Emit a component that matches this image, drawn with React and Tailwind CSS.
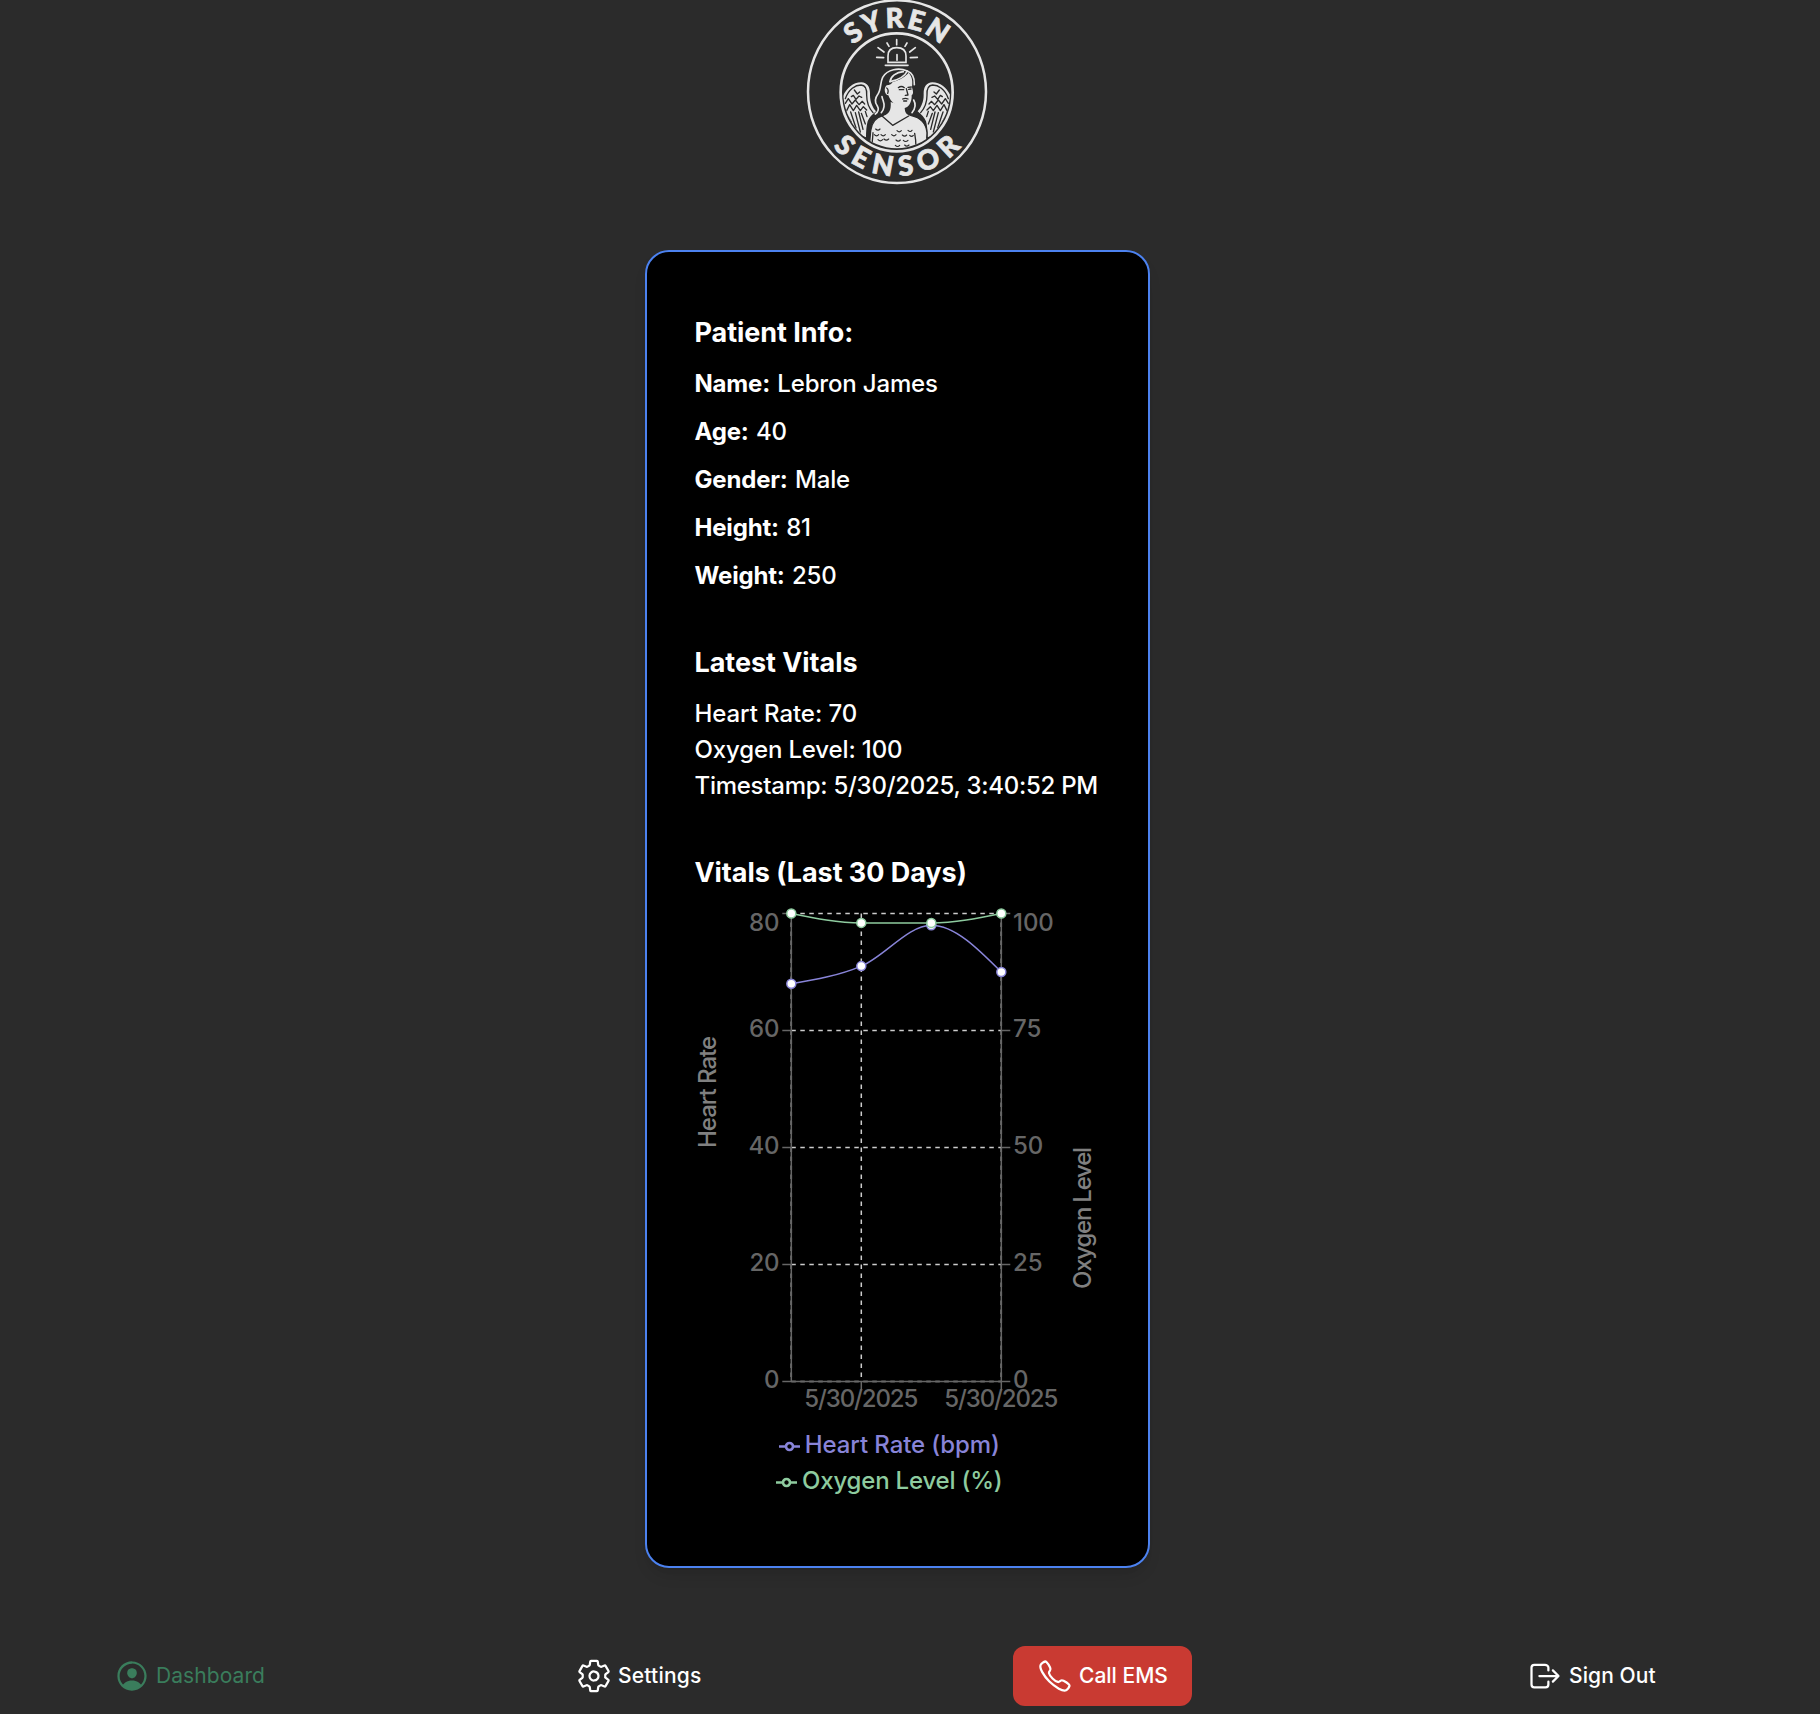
import { IoPersonCircleOutline, IoSettingsOutline, IoCallOutline, IoLogOutOutline } from "react-icons/io5";

const INK = "#2b2b2b";
const LIGHT = "#e6e6e6";

function Wing() {
  return (
    <g>
      <path
        d="M150 312C160 276 180 248 214 247C233 248 241 262 240 284C240 306 248 322 258 334C246 344 238 352 233 364C229 378 228 396 228 412C190 400 160 356 150 312Z"
        fill={LIGHT}
      />
      <g fill="none" stroke={INK} strokeWidth="4" strokeLinecap="round" strokeLinejoin="round">
        <path d="M166 296C176 268 196 255 213 255C228 256 231 270 230 286C230 308 238 326 249 338" />
        <path d="M193 270L202 282L209 276M184 290L190 286L198 298L207 288L215 292" />
        <path d="M166 310L175 296L186 312L196 300L207 314L217 304L224 312" />
        <path d="M170 332L179 314L190 332L200 316L211 332L220 320L230 330" />
        <path d="M168 340L184 366M182 336L198 384M196 338L211 396M206 336L219 388M214 340L226 372M226 334L231 350" />
      </g>
    </g>
  );
}

function Logo() {
  return (
    <svg viewBox="0 0 660 600" className="h-[200px] w-[220px]" role="img" aria-label="Syren Sensor">
      <defs>
        <path id="arc-top" d="M128 276A193 193 0 0 1 514 276" />
        <path id="arc-bottom" d="M68 276A253 252 0 0 0 574 276" />
        <clipPath id="badge">
          <ellipse cx="320" cy="277" rx="160" ry="168" />
        </clipPath>
      </defs>
      <ellipse cx="321" cy="275" rx="267" ry="274" fill="none" stroke={LIGHT} strokeWidth="7.5" />
      <ellipse cx="320" cy="277" rx="168" ry="177" fill="none" stroke={LIGHT} strokeWidth="8" />
      <g
        fill={LIGHT}
        stroke={LIGHT}
        strokeWidth="2.5"
        fontFamily="Lato, sans-serif"
        fontWeight="900"
        fontSize="82"
      >
        <text textAnchor="middle" textLength="290">
          <textPath href="#arc-top" startOffset="50%" textLength="290">SYREN</textPath>
        </text>
        <text textAnchor="middle" textLength="436">
          <textPath href="#arc-bottom" startOffset="50%" textLength="436">SENSOR</textPath>
        </text>
      </g>
      <g fill="none" stroke={LIGHT} strokeWidth="5" strokeLinecap="round">
        <path d="M320 119V134M291 129L297 139M351 129L345 139M264 143L282 156M376 143L359 156M260 172L281 173M361 173L382 172" />
        <path d="M294 187V168C294 150 304 143 320 143S348 150 348 168V187Z" />
        <path d="M321 164V181" />
        <path d="M286 196H354" />
      </g>
      <g clipPath="url(#badge)">
        <Wing />
        <g transform="translate(641 0) scale(-1 1)">
          <Wing />
        </g>
        <path
          d="M302 312C304 330 298 342 278 347C256 353 245 368 242 392L236 460H408L411 398C408 368 388 352 364 347C350 344 344 338 344 322Z"
          fill={LIGHT}
          stroke={INK}
          strokeWidth="4"
        />
        <path
          d="M256 342C268 330 258 320 254 306C252 292 266 284 268 262C268 232 290 206 326 204C352 206 374 222 375 250L374 300C382 316 378 330 368 340L344 336L300 338Z"
          fill={INK}
        />
        <path
          d="M302 306C304 330 298 342 280 348L308 376L358 347C350 344 344 338 344 320Z"
          fill={LIGHT}
        />
        <path
          d="M295 286C284 286 280 264 290 256C298 254 304 254 308 246C330 240 348 228 356 218C368 232 368 246 366 262C370 276 371 282 365 286C366 306 356 323 344 324C322 322 302 308 295 286Z"
          fill={LIGHT}
        />
        <g fill="none" stroke={LIGHT} strokeWidth="5" strokeLinecap="round" strokeLinejoin="round">
          <path d="M352 213C326 202 292 208 278 232C270 248 274 268 264 282C252 298 254 308 262 318C268 328 264 336 256 342" />
          <path d="M300 245C324 240 344 230 352 213C366 218 374 232 373 254" />
          <path d="M300 245C302 230 318 216 340 215" />
          <path d="M276 290C278 302 284 308 282 320C281 328 278 334 274 338" />
          <path d="M371 300C378 312 376 326 366 338" />
        </g>
        <g fill="none" stroke={INK} strokeWidth="4" strokeLinecap="round" strokeLinejoin="round">
          <path d="M276 348L308 376L356 348" />
          <path d="M325 263C331 258 338 259 343 263M328 269H341M354 262L364 261M356 268L363 267" />
          <path d="M349 266L354 285L346 286M338 297C344 294 350 295 354 297M341 303H350" />
          <path d="M290 264C294 266 296 274 293 280" />
          <path d="M249 398C248 416 246 432 245 446M374 400C377 414 378 430 378 446" />
        </g>
        <path
          d="M257 387Q264 394 270 387M253 404Q260 411 266 404M273 404Q280 411 286 404M264 419Q271 426 278 419M282 417Q289 424 296 417M305 404Q312 411 318 404M321 392Q328 399 334 392M337 405Q344 412 350 405M354 391Q361 398 366 391M359 406Q365 412 370 406M318 420Q325 427 331 420M340 421Q347 428 354 421M316 436Q323 443 329 436M344 435Q350 442 357 435"
          fill="none"
          stroke={INK}
          strokeWidth="3.5"
          strokeLinecap="round"
        />
      </g>
    </svg>
  );
}

const patient = [
  ["Name:", "Lebron James"],
  ["Age:", "40"],
  ["Gender:", "Male"],
  ["Height:", "81"],
  ["Weight:", "250"],
];

const xs = [96.3, 166.3, 236.3, 306.3];
const heartY = [83.7, 66.1, 25.2, 72];
const oxygenY = [13.5, 22.9, 22.9, 13.5];
const ticks = [
  { y: 13.5, base: 31, left: "80", right: "100" },
  { y: 130.5, base: 137, left: "60", right: "75" },
  { y: 247.5, base: 254, left: "40", right: "50" },
  { y: 364.5, base: 371, left: "20", right: "25" },
  { y: 481.5, base: 488, left: "0", right: "0" },
];

function VitalsChart() {
  return (
    <svg width="405" height="520" viewBox="0 0 405 520" className="block shrink-0 overflow-visible" fontSize="24">
      <g stroke="#cccccc" strokeWidth="1.5" strokeDasharray="4.5 4.5">
        {ticks.map((t) => (
          <path key={t.y} d={`M96.3 ${t.y}H306.3`} />
        ))}
        {[96.3, 166.3, 306.3].map((x) => (
          <path key={x} d={`M${x} 13.5V481.5`} />
        ))}
      </g>
      <g stroke="#666666" strokeWidth="1.5">
        <path d="M96.3 13.5V481.5M306.3 13.5V481.5M96.3 481.5H306.3M166.3 481.5V490.5M306.3 481.5V490.5" />
        {ticks.map((t) => (
          <path key={t.y} d={`M87.3 ${t.y}H96.3M306.3 ${t.y}H315.3`} />
        ))}
      </g>
      <g fill="#666666">
        {ticks.map((t) => (
          <g key={t.y}>
            <text x="84.5" y={t.base} textAnchor="end">{t.left}</text>
            <text x="318" y={t.base}>{t.right}</text>
          </g>
        ))}
        <text x="166.3" y="507" textAnchor="middle" textLength="114">5/30/2025</text>
        <text x="306.3" y="507" textAnchor="middle" textLength="114">5/30/2025</text>
      </g>
      <g fill="#808080">
        <text transform="translate(21 248) rotate(-90)" textLength="112">Heart Rate</text>
        <text transform="translate(395.7 389) rotate(-90)" textLength="142">Oxygen Level</text>
      </g>
      <path
        d="M96.3 83.7C119.6 79.8 143 75.9 166.3 66.1C189.6 56.4 213 25.2 236.3 25.2C259.6 25.2 283 48.6 306.3 72"
        fill="none"
        stroke="#8884d8"
        strokeWidth="1.5"
      />
      {xs.map((x, i) => (
        <circle key={x} cx={x} cy={heartY[i]} r="4.5" fill="#fff" stroke="#8884d8" strokeWidth="1.5" />
      ))}
      <path
        d="M96.3 13.5C119.6 18.2 143 22.9 166.3 22.9H236.3C259.6 22.9 283 18.2 306.3 13.5"
        fill="none"
        stroke="#8ecb9f"
        strokeWidth="1.5"
      />
      {xs.map((x, i) => (
        <circle key={x} cx={x} cy={oxygenY[i]} r="4.5" fill="#fff" stroke="#8ecb9f" strokeWidth="1.5" />
      ))}
    </svg>
  );
}

function LegendItem({ label, className }) {
  return (
    <div className={`flex h-9 items-center ${className}`}>
      <svg width="21" height="21" viewBox="0 0 32 32" className="mt-[3px] mr-[5px]" fill="none" stroke="currentColor" strokeWidth="4">
        <path d="M0 16H10.67A5.33 5.33 0 1 1 21.33 16H32M21.33 16A5.33 5.33 0 1 1 10.67 16" />
      </svg>
      <span>{label}</span>
    </div>
  );
}

function NavItem({ icon: Icon, label, className }) {
  return (
    <button className={`flex h-[60px] items-center gap-1.5 rounded-xl px-6 text-[21px] whitespace-nowrap ${className}`}>
      <Icon className="size-9 shrink-0" />
      <span>{label}</span>
    </button>
  );
}

export default function App() {
  return (
    <div className="flex h-[1714px] w-[1820px] flex-col overflow-hidden bg-[#2b2b2b] font-[Inter,sans-serif] text-white">
      <header className="flex h-[250px] shrink-0 pl-[790px]">
        <Logo />
      </header>
      <main className="ml-[645px] flex h-[1318px] w-[505px] shrink-0 flex-col rounded-3xl border-2 border-[#4c82f0] bg-black pt-[61px] pl-[47.5px] text-2xl leading-9 font-[450] tracking-[-0.08px] shadow-lg">
        <h2 className="mb-[13px] text-[27px] leading-10 font-bold tracking-[-0.05px]">Patient Info:</h2>
        {patient.map(([k, v]) => (
          <p key={k} className="mb-3 tracking-[-0.16px]">
            <strong className="mr-px font-bold tracking-[-0.18px]">{k}</strong> {v}
          </p>
        ))}
        <h2 className="mt-[37px] mb-[13px] text-[27px] leading-10 font-bold tracking-[-0.05px]">Latest Vitals</h2>
        <p>Heart Rate: 70</p>
        <p className="tracking-[-0.14px]">Oxygen Level: 100</p>
        <p className="tracking-[-0.26px] whitespace-nowrap">Timestamp: 5/30/2025, 3:40:52 PM</p>
        <h2 className="mt-[49px] mb-[7px] text-[27px] leading-10 font-bold tracking-[-0.05px]">Vitals (Last 30 Days)</h2>
        <VitalsChart />
        <div className="mr-[64px] flex flex-col items-center pt-[7px]">
          <LegendItem label="Heart Rate (bpm)" className="text-[#8884d8]" />
          <LegendItem label="Oxygen Level (%)" className="tracking-[-0.2px] text-[#8ecb9f]" />
        </div>
      </main>
      <nav className="mt-[78px] flex shrink-0 pl-[90px]">
        <NavItem icon={IoPersonCircleOutline} label="Dashboard" className="mr-[264px] w-[198px] tracking-[0.08px] text-[#3a7d5c]" />
        <NavItem icon={IoSettingsOutline} label="Settings" className="mr-[287px] w-[174px] font-medium tracking-[0.2px]" />
        <NavItem icon={IoCallOutline} label="Call EMS" className="mr-[311px] w-[179px] bg-[#c93a32] font-medium" />
        <NavItem icon={IoLogOutOutline} label="Sign Out" className="w-[177px] font-medium tracking-[0.1px]" />
      </nav>
    </div>
  );
}
